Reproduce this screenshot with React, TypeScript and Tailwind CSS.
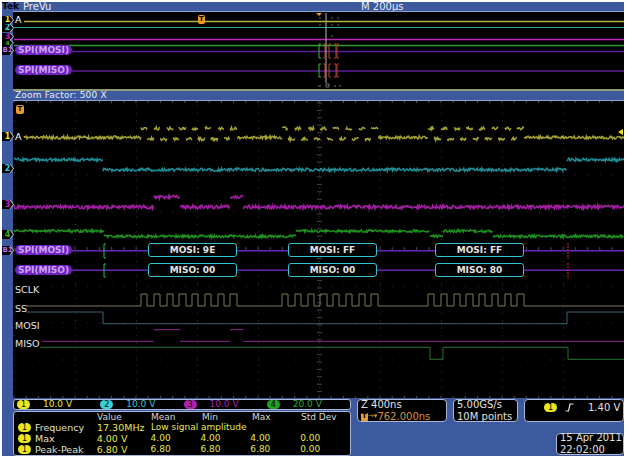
import type { ReactNode } from "react"

const FONT = "font-['DejaVu_Sans',sans-serif]"

function noise(seed: number) {
  let s = seed
  return () => {
    s = (s * 16807) % 2147483647
    return s / 2147483647 - 0.5
  }
}

type Step = [number, number]

// steps are [x where the level starts, y of the level]
function noisyPath(steps: Step[], end: number, amp: number, seed: number) {
  const rnd = noise(seed)
  let d = ""
  steps.forEach(([x0, y], i) => {
    const x1 = i + 1 < steps.length ? steps[i + 1][0] : end
    for (let x = x0; x <= x1; x += 0.75) {
      d += `${x === x0 ? "M" : "L"}${x} ${(y + rnd() * amp).toFixed(1)}`
    }
  })
  return d
}

function flatPath(steps: Step[], end: number) {
  let d = ""
  steps.forEach(([x0, y], i) => {
    const x1 = i + 1 < steps.length ? steps[i + 1][0] : end
    d += `${d ? "L" : "M"}${x0} ${y}L${x1} ${y}`
  })
  return d
}

const bursts = [141, 282, 428]

function burstSteps(high: number, low: number, idle: number, start: number) {
  const steps: Step[] = [[start, idle]]
  bursts.forEach((b) => {
    for (let i = 0; i < 8; i++) {
      steps.push([Math.round(b + i * 12.75), high])
      steps.push([Math.round(b + i * 12.75 + 6.4), low])
    }
    steps.push([Math.round(b + 8 * 12.75 - 6), idle])
  })
  return steps
}

const cyan = (a: number, b: number, start: number): Step[] => [[start, a], [103, b], [567, a]]
const magenta = (a: number, b: number, start: number): Step[] => [[start, a], [154, b], [180, a], [230, b], [243, a]]
const green = (a: number, b: number): Step[] => [[14, a], [104, b], [296, a], [430, b], [443, a], [493, b]]
const greenD = (a: number, b: number, start: number): Step[] => [[start, a], [430, b], [443, a], [568, b]]

function Grid() {
  const xs: number[] = []
  for (let x = 319 - 61 * 5; x < 624; x += 61) xs.push(x)
  const ys = [136, 173, 210, 247, 284, 321, 358]
  const dots: string[] = []
  xs.forEach((x) => {
    for (let y = 104; y < 396; y += 7.4) dots.push(`M${x} ${y}h1`)
  })
  ys.forEach((y) => {
    for (let x = 14; x < 624; x += 12.2) dots.push(`M${x} ${y}h1`)
  })
  const ticks: string[] = []
  for (let x = 14; x < 624; x += 12.2) ticks.push(`M${x} 99v2M${x} 394v2`)
  const axis: string[] = []
  for (let y = 101; y < 396; y += 7.4) axis.push(`M317 ${y}h5`)
  for (let x = 14; x < 624; x += 12.2) axis.push(`M${x} 245v4`)
  return (
    <g>
      <path d={dots.join("")} stroke="#333" />
      <path d={ticks.join("")} stroke="#555" />
      <path d={axis.join("")} stroke="#444" />
    </g>
  )
}

function Scope() {
  return (
    <svg width="611" height="297" viewBox="13 99 611 297" className="block bg-black">
      <Grid />
      <path d={noisyPath(burstSteps(126.5, 137, 135.5, 24), 624, 3, 11)} fill="none" stroke="#a3a232" strokeWidth="1.5" />
      <path d={noisyPath(cyan(157.7, 167.7, 14), 624, 3, 23)} fill="none" stroke="#1f8c96" strokeWidth="1.5" />
      <path d={noisyPath(magenta(205, 195, 14), 624, 3.4, 37)} fill="none" stroke="#a01fa0" strokeWidth="1.6" />
      <path d={noisyPath(green(229, 234.3), 624, 2.6, 51)} fill="none" stroke="#1f911f" strokeWidth="1.5" />
      <path d="M72 248.7H148M237 248.7H288M377 248.7H435M523 248.7H624M72 268.3H148M237 268.3H288M377 268.3H435M523 268.3H624" stroke="#6a24b4" strokeWidth="1.4" />
      <path d="M106 242h-2v14h2M106 262h-2v13h2" fill="none" stroke="#1fc04a" />
      <path d="M568 241v16M568 261v16" stroke="#c0202a" strokeDasharray="2 1" strokeWidth="1.2" />
      <path d={flatPath(burstSteps(292, 304, 304, 26), 624)} fill="none" stroke="#7d7b55" />
      <path d={flatPath(cyan(310, 321.7, 26), 624)} fill="none" stroke="#3a6272" />
      <path d="M42 339.3H154M180 339.3H230M243 339.3H624M154 327.7H180M230 327.7H243" fill="none" stroke="#8e2a90" />
      <path d={flatPath(greenD(345.3, 357.3, 40), 624)} fill="none" stroke="#2a7230" />
    </svg>
  )
}

function Overview() {
  return (
    <svg width="611" height="77" viewBox="13 11 611 77" className="block bg-black">
      <path d="M24 20.5H624" stroke="#b5b43c" strokeWidth="1.5" />
      <path d="M14 26.5H624" stroke="#2fa6a8" strokeWidth="1.2" />
      <path d="M14 38.5H624" stroke="#b82ab0" strokeWidth="1.4" />
      <path d="M14 44.5H624" stroke="#2c9a2c" strokeWidth="1.5" />
      <path d="M72 50.5H624M72 70H624" stroke="#5c1f96" strokeWidth="1.4" />
      <path d="M321 43h-2v14h2M321 63h-2v13h2" fill="none" stroke="#40b040" />
      <path d="M323 43h2v14h-2M323 63h2v13h-2M331 43h-2v14h2M331 63h-2v13h2M334 43h2v14h-2M334 63h2v13h-2M339 43h-2v14h2M339 63h-2v13h2" fill="none" stroke="#b84028" />
      <path d="M319 17h2M331 17h2M337 17h2M319 24h2M331 24h2M337 24h2M331 35h2" stroke="#666" />
      <path d="M319 15l-3-3h6z" fill="#e8a030" />
      <path d="M326 12V82" stroke="#9a9a9a" strokeWidth="1.2" />
      <path d="M318 85h3M326 83h3v3h-3zM334 85h2M339 85h2" fill="none" stroke="#777" />
    </svg>
  )
}

function Marker({ tone, children, className }: { tone: string; children: ReactNode; className: string }) {
  return (
    <div className={`absolute left-[-11px] w-[12px] bg-[#d8d8d8] [clip-path:polygon(0_0,70%_0,100%_50%,70%_100%,0_100%)] ${className}`}>
      <div className={`flex h-full w-[11px] items-center justify-center bg-black [clip-path:polygon(0_0,70%_0,100%_50%,70%_100%,0_100%)] leading-none font-bold ${tone}`}>
        {children}
      </div>
    </div>
  )
}

function Pill({ children, className }: { children: ReactNode; className: string }) {
  return (
    <div className={`absolute left-[2px] flex h-[10px] w-[57px] items-center justify-center rounded-full bg-[#6f22c4] text-[9px] leading-none font-bold text-[#c9a6ee] ${className}`}>
      {children}
    </div>
  )
}

function Bus({ children, className }: { children: ReactNode; className: string }) {
  return (
    <div className={`absolute flex h-[14px] w-[89px] items-center justify-center rounded-[3px] border border-[#35c3cf] bg-black text-[9px] leading-none font-bold text-[#e4e4e4] ${className}`}>
      {children}
    </div>
  )
}

function Label({ children, className }: { children: ReactNode; className: string }) {
  return <div className={`absolute left-[2px] text-[9.5px] leading-[10px] text-[#e4e4e4] ${className}`}>{children}</div>
}

function Dot({ tone, children }: { tone: string; children: ReactNode }) {
  return (
    <span className={`flex h-[9px] w-[13px] items-center justify-center rounded-full text-[8px] leading-none text-black ${tone}`}>
      {children}
    </span>
  )
}

function Channel({ n, tone, text, v }: { n: string; tone: string; text: string; v: string }) {
  return (
    <div className="flex w-[85px] items-center">
      <Dot tone={tone}>{n}</Dot>
      <span className={`ml-[13px] ${text}`}>{v}</span>
    </div>
  )
}

function Row({ label, cells }: { label: string; cells: string[] }) {
  return (
    <div className="flex h-[11px] items-center whitespace-nowrap text-[#e6e65a]">
      <span className="w-[18px] pl-[4px]">
        <Dot tone="bg-[#e8e820]">1</Dot>
      </span>
      <span className="w-[65px] pl-[3px] text-[9.5px] text-[#e0e0d0]">{label}</span>
      {cells.map((c, i) => (
        <span key={i} className={i === 0 ? "w-[54px] text-[9.5px]" : "w-[50px]"}>
          {c}
        </span>
      ))}
    </div>
  )
}

export default function App() {
  return (
    <div className={`h-[458px] w-[628px] overflow-hidden bg-white pt-[2px] pr-[4px] pb-[2px] pl-[2px] ${FONT}`}>
      <div className="flex h-full flex-col bg-[#3d5a9f]">
        {/* title bar */}
        <div className="relative flex h-[9px] items-center text-[10px] leading-none text-[#e8ecf8]">
          <span className="w-[21px] text-[9px] font-bold text-black">Tek</span>
          <span>PreVu</span>
          <span className="absolute left-[359px]">M 200µs</span>
        </div>

        {/* overview */}
        <div className="relative ml-[11px] w-[611px] border-t border-[#8fa3d0]">
          <Overview />
          <Marker tone="text-[#e8e820]" className="top-[4px] h-[8px] text-[8px]">1</Marker>
          <Marker tone="text-[#35d0d8]" className="top-[12px] h-[8px] text-[8px]">2</Marker>
          <Marker tone="text-[#c020c0]" className="top-[21px] h-[7px] text-[8px]">3</Marker>
          <Marker tone="text-[#30b030]" className="top-[28px] h-[6px] text-[6px]">4</Marker>
          <Marker tone="text-[#b070f0]" className="top-[34px] h-[9px] text-[7px]">B1</Marker>
          <div className="absolute top-[3px] left-[2px] text-[9.5px] leading-[10px] text-white">A</div>
          <div className="absolute top-[3px] left-[185px] flex h-[9px] w-[7px] items-center justify-center rounded-[2px] bg-[#e89a30] text-[7px] leading-none font-bold text-black">T</div>
          <Pill className="top-[33px]">SPI(MOSI)</Pill>
          <Pill className="top-[53px]">SPI(MISO)</Pill>
        </div>
        <div className="ml-[11px] h-[2px] bg-[#8f9a78]" />

        {/* zoom factor */}
        <div className="ml-[11px] flex h-[9px] items-center pl-[2px] text-[9px] leading-none tracking-[0.2px] text-[#e8ecf8]">
          Zoom Factor: 500 X
        </div>

        {/* main window */}
        <div className="relative ml-[11px] w-[611px] border-t border-[#8fa3d0]">
          <Scope />
          <Marker tone="text-[#e8e820]" className="top-[31px] h-[9px] text-[8px]">1</Marker>
          <Marker tone="text-[#35d0d8]" className="top-[63px] h-[9px] text-[8px]">2</Marker>
          <Marker tone="text-[#c020c0]" className="top-[99px] h-[9px] text-[8px]">3</Marker>
          <Marker tone="text-[#30b030]" className="top-[129px] h-[9px] text-[8px]">4</Marker>
          <Marker tone="text-[#b070f0]" className="top-[145px] h-[9px] text-[7px]">B1</Marker>
          <div className="absolute top-[4px] left-[3px] flex h-[9px] w-[8px] items-center justify-center rounded-[2px] bg-[#e89a30] text-[7px] leading-none font-bold text-black">T</div>
          <div className="absolute top-[31px] left-[2px] text-[9.5px] leading-[10px] text-white">A</div>
          <div className="absolute top-[28px] right-[1px] h-0 w-0 border-y-[3px] border-r-[5px] border-y-transparent border-r-[#f0e020]" />
          <Pill className="top-[144px]">SPI(MOSI)</Pill>
          <Pill className="top-[164px]">SPI(MISO)</Pill>
          <Bus className="top-[142px] left-[135px]">MOSI: 9E</Bus>
          <Bus className="top-[142px] left-[275px]">MOSI: FF</Bus>
          <Bus className="top-[142px] left-[422px]">MOSI: FF</Bus>
          <Bus className="top-[162px] left-[135px]">MISO: 00</Bus>
          <Bus className="top-[162px] left-[275px]">MISO: 00</Bus>
          <Bus className="top-[162px] left-[422px]">MISO: 80</Bus>
          <Label className="top-[184px]">SCLK</Label>
          <Label className="top-[203px]">SS</Label>
          <Label className="top-[220px]">MOSI</Label>
          <Label className="top-[238px]">MISO</Label>
        </div>

        {/* readouts */}
        <div className="mt-auto ml-[11px] flex gap-[6px] text-[9px] leading-none">
          <div className="flex w-[338px] flex-col gap-[1px]">
            <div className="flex h-[11px] items-center rounded-[3px] border border-[#a9b6d6] bg-black pl-[3px]">
              <Channel n="1" tone="bg-[#e8e820]" text="text-[#e6e65a]" v="10.0 V" />
              <Channel n="2" tone="bg-[#35d0d8]" text="text-[#35c8d0]" v="10.0 V" />
              <Channel n="3" tone="bg-[#b020b0]" text="text-[#a820a8]" v="10.0 V" />
              <Channel n="4" tone="bg-[#20a020]" text="text-[#30a830]" v="20.0 V" />
            </div>
            <div className="h-[45px] rounded-[3px] border border-[#a9b6d6] bg-black">
              <div className="flex h-[10px] items-center pl-[83px] text-[#d8d8d8]">
                <span className="w-[54px]">Value</span>
                <span className="w-[51px]">Mean</span>
                <span className="w-[50px]">Min</span>
                <span className="w-[49px]">Max</span>
                <span>Std Dev</span>
              </div>
              <Row label="Frequency" cells={["17.30MHz", "Low signal amplitude"]} />
              <Row label="Max" cells={["4.00 V", "4.00", "4.00", "4.00", "0.00"]} />
              <Row label="Peak-Peak" cells={["6.80 V", "6.80", "6.80", "6.80", "0.00"]} />
            </div>
          </div>
          <div className="flex flex-1 flex-col justify-between pb-[1px] text-[10px]">
            <div className="flex gap-[6px]">
              <div className="flex h-[23px] w-[90px] flex-col justify-center gap-[2px] rounded-[4px] border border-[#a9b6d6] bg-black pl-[3px] text-[#e0e0e0]">
                <span>Z 400ns</span>
                <span className="flex items-center text-[#d8923c]">
                  <span className="flex h-[8px] w-[7px] items-center justify-center rounded-[1px] bg-[#e89a30] text-[7px] font-bold text-black">T</span>
                  <span className="text-[7px]">→▾</span>
                  <span>762.000ns</span>
                </span>
              </div>
              <div className="flex h-[23px] w-[65px] flex-col justify-center gap-[2px] rounded-[4px] border border-[#a9b6d6] bg-black pl-[3px] text-[#e0e0e0]">
                <span>5.00GS/s</span>
                <span>10M points</span>
              </div>
              <div className="flex h-[23px] w-[100px] items-start rounded-[4px] border border-[#a9b6d6] bg-black pt-[3px] pl-[19px] text-[#e0e0e0]">
                <Dot tone="bg-[#e8e820]">1</Dot>
                <svg width="9" height="9" viewBox="0 0 9 9" className="ml-[8px]">
                  <path d="M0.5 8H3.5L5 1H8.5" fill="none" stroke="#e0e0e0" strokeWidth="1.2" />
                </svg>
                <span className="ml-[14px]">1.40 V</span>
              </div>
            </div>
            <div className="flex h-[22px] w-[68px] flex-col justify-center gap-[2px] self-end rounded-[4px] border border-[#a9b6d6] bg-black pl-[3px] text-[#e0e0e0]">
              <span>15 Apr 2011</span>
              <span>22:02:00</span>
            </div>
          </div>
        </div>
      </div>
    </div>
  )
}
